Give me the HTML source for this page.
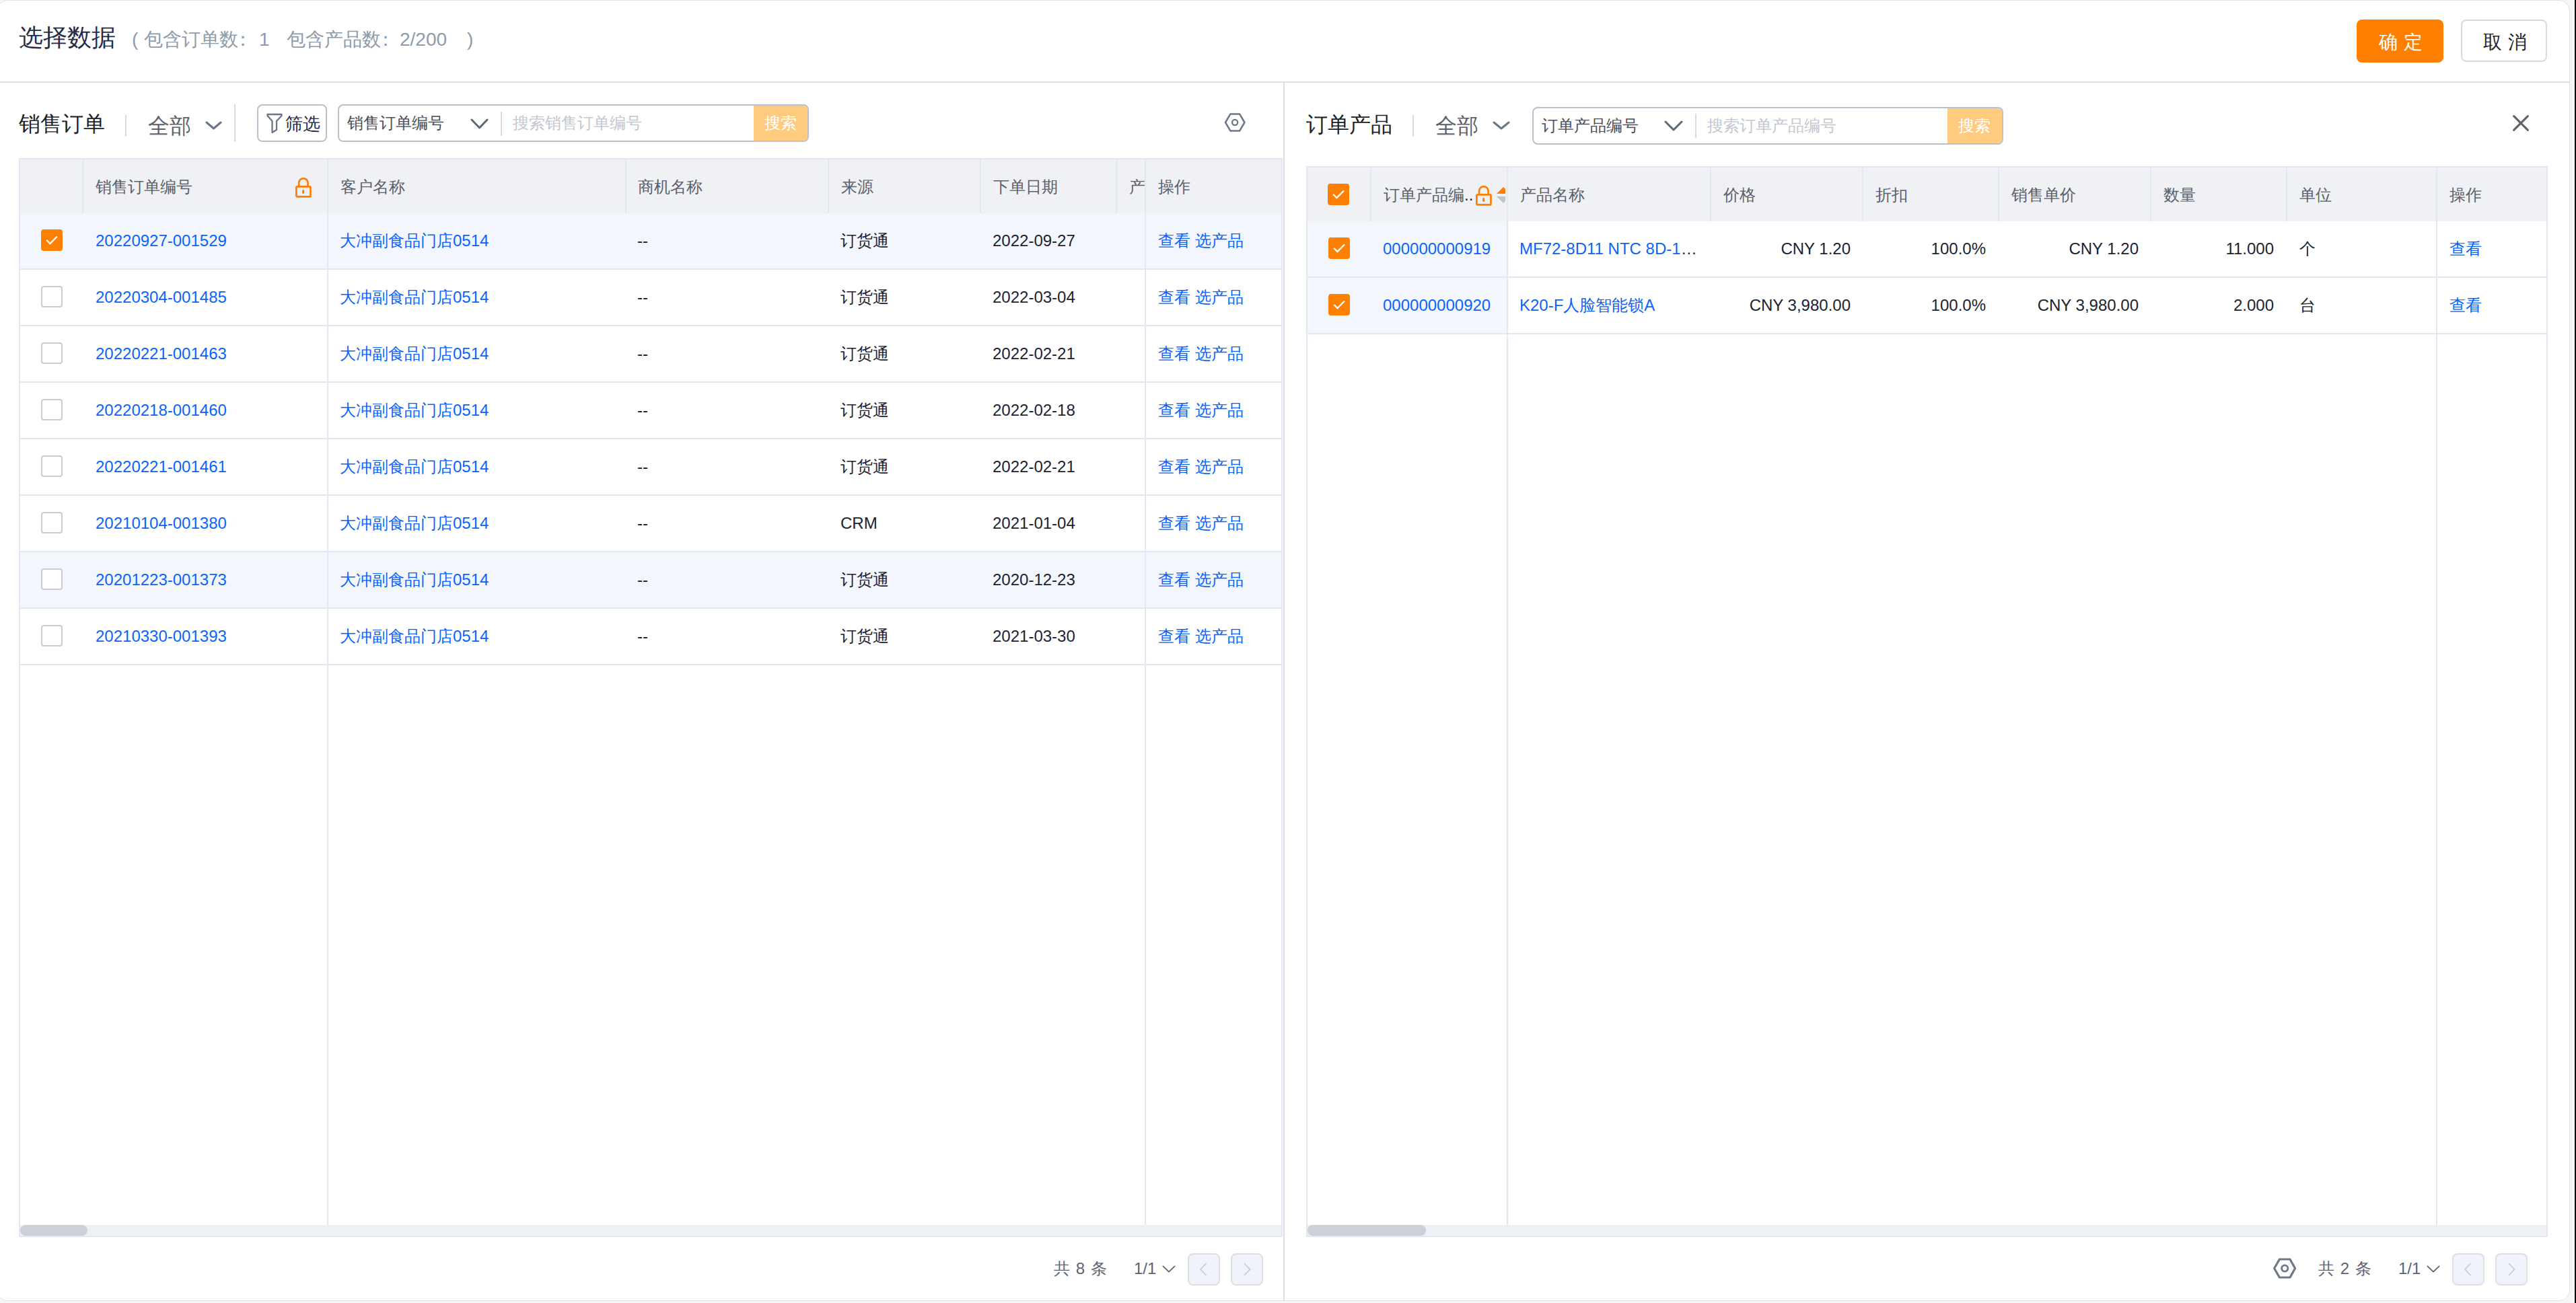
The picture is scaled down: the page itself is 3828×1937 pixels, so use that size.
<!DOCTYPE html>
<html><head><meta charset="utf-8">
<style>
*{box-sizing:border-box;margin:0;padding:0}
html,body{width:3828px;height:1937px;overflow:hidden;background:#f6f6f6;font-family:"Liberation Sans",sans-serif}
.abs{position:absolute}
.t{position:absolute;white-space:nowrap}
</style></head><body>

<div class="abs" style="left:3825px;top:0px;width:1px;height:1937px;background:#fff;"></div>
<div class="abs" style="left:3826px;top:0px;width:2px;height:1937px;background:#000;"></div>
<div class="abs" style="left:-5px;top:0;width:3824px;height:1934px;background:#fff;border:1px solid #e2e2e2;border-radius:16px"></div>
<div class="t" style="left:28px;top:36px;font-size:36px;line-height:40px;height:40px;color:#262b48;">选择数据</div>
<div class="t" style="left:196px;top:41px;font-size:28px;line-height:36px;height:36px;color:#8e9bab;">(</div>
<div class="t" style="left:214px;top:41px;font-size:28px;line-height:36px;height:36px;color:#8e9bab;">包含订单数</div>
<div class="t" style="left:347px;top:41px;font-size:28px;line-height:36px;height:36px;color:#8e9bab;">：</div>
<div class="t" style="left:385px;top:41px;font-size:28px;line-height:36px;height:36px;color:#8e9bab;">1</div>
<div class="t" style="left:426px;top:41px;font-size:28px;line-height:36px;height:36px;color:#8e9bab;">包含产品数</div>
<div class="t" style="left:559px;top:41px;font-size:28px;line-height:36px;height:36px;color:#8e9bab;">：</div>
<div class="t" style="left:594px;top:41px;font-size:28px;line-height:36px;height:36px;color:#8e9bab;">2/200</div>
<div class="t" style="left:694px;top:41px;font-size:28px;line-height:36px;height:36px;color:#8e9bab;">)</div>
<div class="abs" style="left:3502px;top:29px;width:129px;height:64px;border-radius:8px;background:#ff8000"></div>
<div class="t" style="left:3535px;top:45px;font-size:28px;line-height:36px;height:36px;color:#fff;letter-spacing:9px">确定</div>
<div class="abs" style="left:3657px;top:29px;width:128px;height:63px;border-radius:8px;border:2px solid #d6dae2;background:#fff"></div>
<div class="t" style="left:3690px;top:45px;font-size:28px;line-height:36px;height:36px;color:#1f2330;letter-spacing:9px">取消</div>
<div class="abs" style="left:0px;top:121px;width:3819px;height:2px;background:#dcdfe5;"></div>
<div class="abs" style="left:1907px;top:123px;width:2px;height:1811px;background:#dcdfe5;"></div>
<div class="t" style="left:28px;top:164px;font-size:32px;line-height:40px;height:40px;color:#1b1f28;">销售订单</div>
<div class="abs" style="left:186px;top:171px;width:2px;height:32px;background:#d7dce4;"></div>
<div class="t" style="left:220px;top:167px;font-size:32px;line-height:40px;height:40px;color:#5c6068;">全部</div>
<svg class="abs" style="left:305px;top:180px" width="25" height="13" viewBox="0 0 25 13"><path d="M2.0 2.0 L12.5 11.0 L23.0 2.0" fill="none" stroke="#6b7588" stroke-width="3" stroke-linecap="round" stroke-linejoin="round"/></svg>
<div class="abs" style="left:348px;top:155px;width:2px;height:56px;background:#d7dce4;"></div>
<div class="abs" style="left:382px;top:155px;width:104px;height:56px;border-radius:8px;border:2px solid #bac1cd;background:#fff"></div>
<svg class="abs" style="left:394px;top:167px" width="28" height="34" viewBox="0 0 28 34"><path d="M3.5 3 H24.5 V5 L17 13 V26 L10.5 30 V13 L3.5 5 Z" fill="none" stroke="#6b7588" stroke-width="2.3" stroke-linejoin="round"/></svg>
<div class="t" style="left:424px;top:167px;font-size:26px;line-height:34px;height:34px;color:#252a48;">筛选</div>
<div class="abs" style="left:502px;top:155px;width:700px;height:56px;border-radius:8px;border:2px solid #bac1cd;background:#fff;overflow:hidden"><div class="abs" style="right:0;top:0;width:80px;height:52px;background:#ffcb7f"></div></div>
<div class="t" style="left:516px;top:167px;font-size:24px;line-height:32px;height:32px;color:#4a4f5a;">销售订单编号</div>
<svg class="abs" style="left:699px;top:176px" width="27" height="16" viewBox="0 0 27 16"><path d="M2.0 2.0 L13.5 14.0 L25.0 2.0" fill="none" stroke="#5f6878" stroke-width="3" stroke-linecap="round" stroke-linejoin="round"/></svg>
<div class="abs" style="left:744px;top:166px;width:2px;height:36px;background:#d7dce4;"></div>
<div class="t" style="left:762px;top:167px;font-size:24px;line-height:32px;height:32px;color:#c3c7cf;">搜索销售订单编号</div>
<div class="t" style="left:1136px;top:167px;font-size:24px;line-height:32px;height:32px;color:#ffffff;">搜索</div>
<svg class="abs" style="left:1816px;top:165px" width="38" height="34" viewBox="0 0 38 34"><path d="M5 17 L12.3 4.6 H26.2 L33.4 17 L26.2 29.4 H12.3 Z" fill="none" stroke="#6d7789" stroke-width="2.5" stroke-linejoin="round"/><circle cx="19.1" cy="17" r="4.1" fill="none" stroke="#6d7789" stroke-width="2.3"/></svg>
<div class="abs" style="left:28px;top:235px;width:1878px;height:1604px;border:2px solid #e2e7f1"></div>
<div class="abs" style="left:30px;top:237px;width:1874px;height:80px;background:#eff1f5;"></div>
<div class="abs" style="left:122px;top:237px;width:2px;height:80px;background:#e2e7f1;"></div>
<div class="abs" style="left:486px;top:237px;width:2px;height:80px;background:#e2e7f1;"></div>
<div class="abs" style="left:929px;top:237px;width:2px;height:80px;background:#e2e7f1;"></div>
<div class="abs" style="left:1230px;top:237px;width:2px;height:80px;background:#e2e7f1;"></div>
<div class="abs" style="left:1456px;top:237px;width:2px;height:80px;background:#e2e7f1;"></div>
<div class="abs" style="left:1658px;top:237px;width:2px;height:80px;background:#e2e7f1;"></div>
<div class="abs" style="left:1701px;top:237px;width:2px;height:80px;background:#e2e7f1;"></div>
<div class="t" style="left:142px;top:262px;font-size:24px;line-height:32px;height:32px;color:#5b606b;">销售订单编号</div>
<svg class="abs" style="left:438px;top:264px" width="26" height="31" viewBox="0 0 26 31"><path d="M6.1 13.5 V7.95 A6.75 6.75 0 0 1 19.6 7.95 V13.5" fill="none" stroke="#ff7d00" stroke-width="2.6"/><rect x="2.35" y="13.45" width="21.1" height="15" rx="1.5" fill="none" stroke="#ff7d00" stroke-width="2.7"/><line x1="12.65" y1="19.4" x2="12.65" y2="22.5" stroke="#ff7d00" stroke-width="3" stroke-linecap="round"/></svg>
<div class="t" style="left:506px;top:262px;font-size:24px;line-height:32px;height:32px;color:#5b606b;">客户名称</div>
<div class="t" style="left:948px;top:262px;font-size:24px;line-height:32px;height:32px;color:#5b606b;">商机名称</div>
<div class="t" style="left:1250px;top:262px;font-size:24px;line-height:32px;height:32px;color:#5b606b;">来源</div>
<div class="t" style="left:1476px;top:262px;font-size:24px;line-height:32px;height:32px;color:#5b606b;">下单日期</div>
<div class="abs" style="left:1658px;top:237px;width:43px;height:80px;overflow:hidden"><div class="t" style="left:20px;top:25px;font-size:24px;line-height:32px;color:#5b606b">产品</div></div>
<div class="t" style="left:1721px;top:262px;font-size:24px;line-height:32px;height:32px;color:#5b606b;">操作</div>
<div class="abs" style="left:30px;top:317px;width:1874px;height:82px;background:#f3f6fd;"></div>
<div class="abs" style="left:30px;top:399px;width:1874px;height:2px;background:#e2e7f1;"></div>
<div class="abs" style="left:61px;top:341px;width:32px;height:32px;border-radius:4px;background:#ff8000"><svg width="32" height="32" viewBox="0 0 32 32"><path d="M8.2 15.9 L13.4 21.1 L24 10.5" fill="none" stroke="#fff" stroke-width="2.2"/></svg></div>
<div class="t" style="left:142px;top:342px;font-size:24px;line-height:32px;height:32px;color:#0a64fa;">20220927-001529</div>
<div class="t" style="left:505px;top:342px;font-size:24px;line-height:32px;height:32px;color:#0a64fa;">大冲副食品门店0514</div>
<div class="t" style="left:947px;top:342px;font-size:24px;line-height:32px;height:32px;color:#1d2230;">--</div>
<div class="t" style="left:1249px;top:342px;font-size:24px;line-height:32px;height:32px;color:#1d2230;">订货通</div>
<div class="t" style="left:1475px;top:342px;font-size:24px;line-height:32px;height:32px;color:#1d2230;">2022-09-27</div>
<div class="t" style="left:1721px;top:342px;font-size:24px;line-height:32px;height:32px;color:#0a64fa;">查看 选产品</div>
<div class="abs" style="left:30px;top:483px;width:1874px;height:2px;background:#e2e7f1;"></div>
<div class="abs" style="left:61px;top:425px;width:32px;height:32px;border-radius:4px;border:2px solid #c7ccd5;background:#fff"></div>
<div class="t" style="left:142px;top:426px;font-size:24px;line-height:32px;height:32px;color:#0a64fa;">20220304-001485</div>
<div class="t" style="left:505px;top:426px;font-size:24px;line-height:32px;height:32px;color:#0a64fa;">大冲副食品门店0514</div>
<div class="t" style="left:947px;top:426px;font-size:24px;line-height:32px;height:32px;color:#1d2230;">--</div>
<div class="t" style="left:1249px;top:426px;font-size:24px;line-height:32px;height:32px;color:#1d2230;">订货通</div>
<div class="t" style="left:1475px;top:426px;font-size:24px;line-height:32px;height:32px;color:#1d2230;">2022-03-04</div>
<div class="t" style="left:1721px;top:426px;font-size:24px;line-height:32px;height:32px;color:#0a64fa;">查看 选产品</div>
<div class="abs" style="left:30px;top:567px;width:1874px;height:2px;background:#e2e7f1;"></div>
<div class="abs" style="left:61px;top:509px;width:32px;height:32px;border-radius:4px;border:2px solid #c7ccd5;background:#fff"></div>
<div class="t" style="left:142px;top:510px;font-size:24px;line-height:32px;height:32px;color:#0a64fa;">20220221-001463</div>
<div class="t" style="left:505px;top:510px;font-size:24px;line-height:32px;height:32px;color:#0a64fa;">大冲副食品门店0514</div>
<div class="t" style="left:947px;top:510px;font-size:24px;line-height:32px;height:32px;color:#1d2230;">--</div>
<div class="t" style="left:1249px;top:510px;font-size:24px;line-height:32px;height:32px;color:#1d2230;">订货通</div>
<div class="t" style="left:1475px;top:510px;font-size:24px;line-height:32px;height:32px;color:#1d2230;">2022-02-21</div>
<div class="t" style="left:1721px;top:510px;font-size:24px;line-height:32px;height:32px;color:#0a64fa;">查看 选产品</div>
<div class="abs" style="left:30px;top:651px;width:1874px;height:2px;background:#e2e7f1;"></div>
<div class="abs" style="left:61px;top:593px;width:32px;height:32px;border-radius:4px;border:2px solid #c7ccd5;background:#fff"></div>
<div class="t" style="left:142px;top:594px;font-size:24px;line-height:32px;height:32px;color:#0a64fa;">20220218-001460</div>
<div class="t" style="left:505px;top:594px;font-size:24px;line-height:32px;height:32px;color:#0a64fa;">大冲副食品门店0514</div>
<div class="t" style="left:947px;top:594px;font-size:24px;line-height:32px;height:32px;color:#1d2230;">--</div>
<div class="t" style="left:1249px;top:594px;font-size:24px;line-height:32px;height:32px;color:#1d2230;">订货通</div>
<div class="t" style="left:1475px;top:594px;font-size:24px;line-height:32px;height:32px;color:#1d2230;">2022-02-18</div>
<div class="t" style="left:1721px;top:594px;font-size:24px;line-height:32px;height:32px;color:#0a64fa;">查看 选产品</div>
<div class="abs" style="left:30px;top:735px;width:1874px;height:2px;background:#e2e7f1;"></div>
<div class="abs" style="left:61px;top:677px;width:32px;height:32px;border-radius:4px;border:2px solid #c7ccd5;background:#fff"></div>
<div class="t" style="left:142px;top:678px;font-size:24px;line-height:32px;height:32px;color:#0a64fa;">20220221-001461</div>
<div class="t" style="left:505px;top:678px;font-size:24px;line-height:32px;height:32px;color:#0a64fa;">大冲副食品门店0514</div>
<div class="t" style="left:947px;top:678px;font-size:24px;line-height:32px;height:32px;color:#1d2230;">--</div>
<div class="t" style="left:1249px;top:678px;font-size:24px;line-height:32px;height:32px;color:#1d2230;">订货通</div>
<div class="t" style="left:1475px;top:678px;font-size:24px;line-height:32px;height:32px;color:#1d2230;">2022-02-21</div>
<div class="t" style="left:1721px;top:678px;font-size:24px;line-height:32px;height:32px;color:#0a64fa;">查看 选产品</div>
<div class="abs" style="left:30px;top:819px;width:1874px;height:2px;background:#e2e7f1;"></div>
<div class="abs" style="left:61px;top:761px;width:32px;height:32px;border-radius:4px;border:2px solid #c7ccd5;background:#fff"></div>
<div class="t" style="left:142px;top:762px;font-size:24px;line-height:32px;height:32px;color:#0a64fa;">20210104-001380</div>
<div class="t" style="left:505px;top:762px;font-size:24px;line-height:32px;height:32px;color:#0a64fa;">大冲副食品门店0514</div>
<div class="t" style="left:947px;top:762px;font-size:24px;line-height:32px;height:32px;color:#1d2230;">--</div>
<div class="t" style="left:1249px;top:762px;font-size:24px;line-height:32px;height:32px;color:#1d2230;">CRM</div>
<div class="t" style="left:1475px;top:762px;font-size:24px;line-height:32px;height:32px;color:#1d2230;">2021-01-04</div>
<div class="t" style="left:1721px;top:762px;font-size:24px;line-height:32px;height:32px;color:#0a64fa;">查看 选产品</div>
<div class="abs" style="left:30px;top:821px;width:1874px;height:82px;background:#f3f6fd;"></div>
<div class="abs" style="left:30px;top:903px;width:1874px;height:2px;background:#e2e7f1;"></div>
<div class="abs" style="left:61px;top:845px;width:32px;height:32px;border-radius:4px;border:2px solid #c7ccd5;background:#fff"></div>
<div class="t" style="left:142px;top:846px;font-size:24px;line-height:32px;height:32px;color:#0a64fa;">20201223-001373</div>
<div class="t" style="left:505px;top:846px;font-size:24px;line-height:32px;height:32px;color:#0a64fa;">大冲副食品门店0514</div>
<div class="t" style="left:947px;top:846px;font-size:24px;line-height:32px;height:32px;color:#1d2230;">--</div>
<div class="t" style="left:1249px;top:846px;font-size:24px;line-height:32px;height:32px;color:#1d2230;">订货通</div>
<div class="t" style="left:1475px;top:846px;font-size:24px;line-height:32px;height:32px;color:#1d2230;">2020-12-23</div>
<div class="t" style="left:1721px;top:846px;font-size:24px;line-height:32px;height:32px;color:#0a64fa;">查看 选产品</div>
<div class="abs" style="left:30px;top:987px;width:1874px;height:2px;background:#e2e7f1;"></div>
<div class="abs" style="left:61px;top:929px;width:32px;height:32px;border-radius:4px;border:2px solid #c7ccd5;background:#fff"></div>
<div class="t" style="left:142px;top:930px;font-size:24px;line-height:32px;height:32px;color:#0a64fa;">20210330-001393</div>
<div class="t" style="left:505px;top:930px;font-size:24px;line-height:32px;height:32px;color:#0a64fa;">大冲副食品门店0514</div>
<div class="t" style="left:947px;top:930px;font-size:24px;line-height:32px;height:32px;color:#1d2230;">--</div>
<div class="t" style="left:1249px;top:930px;font-size:24px;line-height:32px;height:32px;color:#1d2230;">订货通</div>
<div class="t" style="left:1475px;top:930px;font-size:24px;line-height:32px;height:32px;color:#1d2230;">2021-03-30</div>
<div class="t" style="left:1721px;top:930px;font-size:24px;line-height:32px;height:32px;color:#0a64fa;">查看 选产品</div>
<div class="abs" style="left:486px;top:317px;width:2px;height:1504px;background:#e2e7f1;"></div>
<div class="abs" style="left:1701px;top:317px;width:2px;height:1504px;background:#e2e7f1;"></div>
<div class="abs" style="left:30px;top:1821px;width:1874px;height:16px;background:#eff0f4;"></div>
<div class="abs" style="left:30px;top:1821px;width:100px;height:16px;border-radius:8px;background:#cdd0d8"></div>
<div class="t" style="left:1941px;top:165px;font-size:32px;line-height:40px;height:40px;color:#1b1f28;">订单产品</div>
<div class="abs" style="left:2099px;top:171px;width:2px;height:32px;background:#d7dce4;"></div>
<div class="t" style="left:2133px;top:167px;font-size:32px;line-height:40px;height:40px;color:#5c6068;">全部</div>
<svg class="abs" style="left:2218px;top:180px" width="26" height="13" viewBox="0 0 26 13"><path d="M2.0 2.0 L13.0 11.0 L24.0 2.0" fill="none" stroke="#6b7588" stroke-width="3" stroke-linecap="round" stroke-linejoin="round"/></svg>
<div class="abs" style="left:2277px;top:159px;width:700px;height:56px;border-radius:8px;border:2px solid #bac1cd;background:#fff;overflow:hidden"><div class="abs" style="right:0;top:0;width:81px;height:52px;background:#ffcb7f"></div></div>
<div class="t" style="left:2291px;top:171px;font-size:24px;line-height:32px;height:32px;color:#4a4f5a;">订单产品编号</div>
<svg class="abs" style="left:2473px;top:179px" width="28" height="16" viewBox="0 0 28 16"><path d="M2.0 2.0 L14.0 14.0 L26.0 2.0" fill="none" stroke="#5f6878" stroke-width="3" stroke-linecap="round" stroke-linejoin="round"/></svg>
<div class="abs" style="left:2519px;top:169px;width:2px;height:36px;background:#d7dce4;"></div>
<div class="t" style="left:2537px;top:171px;font-size:24px;line-height:32px;height:32px;color:#c3c7cf;">搜索订单产品编号</div>
<div class="t" style="left:2910px;top:171px;font-size:24px;line-height:32px;height:32px;color:#ffffff;">搜索</div>
<svg class="abs" style="left:3732px;top:169px" width="28" height="28" viewBox="0 0 28 28"><path d="M3.6 3.6 L24.4 24.4 M24.4 3.6 L3.6 24.4" fill="none" stroke="#5f6168" stroke-width="3" stroke-linecap="round"/></svg>
<div class="abs" style="left:1941px;top:247px;width:1845px;height:1592px;border:2px solid #e2e7f1"></div>
<div class="abs" style="left:1943px;top:249px;width:1841px;height:80px;background:#eff1f5;"></div>
<div class="abs" style="left:2036px;top:249px;width:2px;height:80px;background:#e2e7f1;"></div>
<div class="abs" style="left:2239px;top:249px;width:2px;height:80px;background:#e2e7f1;"></div>
<div class="abs" style="left:2541px;top:249px;width:2px;height:80px;background:#e2e7f1;"></div>
<div class="abs" style="left:2767px;top:249px;width:2px;height:80px;background:#e2e7f1;"></div>
<div class="abs" style="left:2969px;top:249px;width:2px;height:80px;background:#e2e7f1;"></div>
<div class="abs" style="left:3195px;top:249px;width:2px;height:80px;background:#e2e7f1;"></div>
<div class="abs" style="left:3397px;top:249px;width:2px;height:80px;background:#e2e7f1;"></div>
<div class="abs" style="left:3620px;top:249px;width:2px;height:80px;background:#e2e7f1;"></div>
<div class="abs" style="left:1973px;top:273px;width:32px;height:32px;border-radius:4px;background:#ff8000"><svg width="32" height="32" viewBox="0 0 32 32"><path d="M8.2 15.9 L13.4 21.1 L24 10.5" fill="none" stroke="#fff" stroke-width="2.2"/></svg></div>
<div class="abs" style="left:2038px;top:249px;width:199px;height:80px;overflow:hidden"><div class="t" style="left:18px;top:25px;font-size:24px;line-height:32px;color:#5b606b">订单产品编<span style="color:#1d2230">..</span></div></div>
<svg class="abs" style="left:2192px;top:276px" width="26" height="31" viewBox="0 0 26 31"><path d="M6.1 13.5 V7.95 A6.75 6.75 0 0 1 19.6 7.95 V13.5" fill="none" stroke="#ff7d00" stroke-width="2.6"/><rect x="2.35" y="13.45" width="21.1" height="15" rx="1.5" fill="none" stroke="#ff7d00" stroke-width="2.7"/><line x1="12.65" y1="19.4" x2="12.65" y2="22.5" stroke="#ff7d00" stroke-width="3" stroke-linecap="round"/></svg>
<div class="abs" style="left:2220px;top:249px;width:17px;height:80px;overflow:hidden"><svg class="abs" style="left:0;top:0" width="30" height="80" viewBox="0 0 30 80"><path d="M4 39 L14 29 L24 39 Z" fill="#ff7d00"/><path d="M4 43 L14 53 L24 43 Z" fill="#c0c4cc"/></svg></div>
<div class="t" style="left:2259px;top:274px;font-size:24px;line-height:32px;height:32px;color:#5b606b;">产品名称</div>
<div class="t" style="left:2561px;top:274px;font-size:24px;line-height:32px;height:32px;color:#5b606b;">价格</div>
<div class="t" style="left:2787px;top:274px;font-size:24px;line-height:32px;height:32px;color:#5b606b;">折扣</div>
<div class="t" style="left:2989px;top:274px;font-size:24px;line-height:32px;height:32px;color:#5b606b;">销售单价</div>
<div class="t" style="left:3215px;top:274px;font-size:24px;line-height:32px;height:32px;color:#5b606b;">数量</div>
<div class="t" style="left:3417px;top:274px;font-size:24px;line-height:32px;height:32px;color:#5b606b;">单位</div>
<div class="t" style="left:3640px;top:274px;font-size:24px;line-height:32px;height:32px;color:#5b606b;">操作</div>
<div class="abs" style="left:1943px;top:329px;width:296px;height:82px;background:#f3f6fd;"></div>
<div class="abs" style="left:1943px;top:411px;width:1841px;height:2px;background:#e2e7f1;"></div>
<div class="abs" style="left:1974px;top:353px;width:32px;height:32px;border-radius:4px;background:#ff8000"><svg width="32" height="32" viewBox="0 0 32 32"><path d="M8.2 15.9 L13.4 21.1 L24 10.5" fill="none" stroke="#fff" stroke-width="2.2"/></svg></div>
<div class="t" style="left:2055px;top:354px;font-size:24px;line-height:32px;height:32px;color:#0a64fa;">000000000919</div>
<div class="t" style="left:2258px;top:354px;font-size:24px;line-height:32px;height:32px;color:#0a64fa;">MF72-8D11 NTC 8D-1<span style="color:#1d2230">…</span></div>
<div class="t" style="right:1078px;top:354px;font-size:24px;line-height:32px;height:32px;color:#1d2230;text-align:right;">CNY 1.20</div>
<div class="t" style="right:877px;top:354px;font-size:24px;line-height:32px;height:32px;color:#1d2230;text-align:right;">100.0%</div>
<div class="t" style="right:650px;top:354px;font-size:24px;line-height:32px;height:32px;color:#1d2230;text-align:right;">CNY 1.20</div>
<div class="t" style="right:449px;top:354px;font-size:24px;line-height:32px;height:32px;color:#1d2230;text-align:right;">11.000</div>
<div class="t" style="left:3417px;top:354px;font-size:24px;line-height:32px;height:32px;color:#1d2230;">个</div>
<div class="t" style="left:3640px;top:354px;font-size:24px;line-height:32px;height:32px;color:#0a64fa;">查看</div>
<div class="abs" style="left:1943px;top:413px;width:296px;height:82px;background:#f3f6fd;"></div>
<div class="abs" style="left:1943px;top:495px;width:1841px;height:2px;background:#e2e7f1;"></div>
<div class="abs" style="left:1974px;top:437px;width:32px;height:32px;border-radius:4px;background:#ff8000"><svg width="32" height="32" viewBox="0 0 32 32"><path d="M8.2 15.9 L13.4 21.1 L24 10.5" fill="none" stroke="#fff" stroke-width="2.2"/></svg></div>
<div class="t" style="left:2055px;top:438px;font-size:24px;line-height:32px;height:32px;color:#0a64fa;">000000000920</div>
<div class="t" style="left:2258px;top:438px;font-size:24px;line-height:32px;height:32px;color:#0a64fa;">K20-F人脸智能锁A</div>
<div class="t" style="right:1078px;top:438px;font-size:24px;line-height:32px;height:32px;color:#1d2230;text-align:right;">CNY 3,980.00</div>
<div class="t" style="right:877px;top:438px;font-size:24px;line-height:32px;height:32px;color:#1d2230;text-align:right;">100.0%</div>
<div class="t" style="right:650px;top:438px;font-size:24px;line-height:32px;height:32px;color:#1d2230;text-align:right;">CNY 3,980.00</div>
<div class="t" style="right:449px;top:438px;font-size:24px;line-height:32px;height:32px;color:#1d2230;text-align:right;">2.000</div>
<div class="t" style="left:3417px;top:438px;font-size:24px;line-height:32px;height:32px;color:#1d2230;">台</div>
<div class="t" style="left:3640px;top:438px;font-size:24px;line-height:32px;height:32px;color:#0a64fa;">查看</div>
<div class="abs" style="left:2239px;top:329px;width:2px;height:1492px;background:#e2e7f1;"></div>
<div class="abs" style="left:3620px;top:329px;width:2px;height:1492px;background:#e2e7f1;"></div>
<div class="abs" style="left:1943px;top:1821px;width:1841px;height:16px;background:#eff0f4;"></div>
<div class="abs" style="left:1943px;top:1821px;width:176px;height:16px;border-radius:8px;background:#cdd0d8"></div>
<div class="t" style="left:1566px;top:1870px;font-size:24px;line-height:32px;height:32px;color:#5d6370;word-spacing:2px">共 8 条</div>
<div class="t" style="left:1685px;top:1870px;font-size:24px;line-height:32px;height:32px;color:#5d6370;">1/1</div>
<svg class="abs" style="left:1727px;top:1881px" width="20" height="11" viewBox="0 0 20 11"><path d="M1.4 1.4 L10.0 9.6 L18.6 1.4" fill="none" stroke="#5d6370" stroke-width="1.8" stroke-linecap="round" stroke-linejoin="round"/></svg>
<div class="abs" style="left:1765px;top:1863px;width:48px;height:48px;border-radius:8px;border:2px solid #dcdfe5;background:#f0f3fa"></div>
<svg class="abs" style="left:1765px;top:1863px" width="47" height="47" viewBox="0 0 47 47"><path d="M27.5 15 L19 24 L27.5 33" fill="none" stroke="#c8cace" stroke-width="1.7"/></svg>
<div class="abs" style="left:1829px;top:1863px;width:48px;height:48px;border-radius:8px;border:2px solid #dcdfe5;background:#f0f3fa"></div>
<svg class="abs" style="left:1829px;top:1863px" width="47" height="47" viewBox="0 0 47 47"><path d="M20 15 L28.5 24 L20 33" fill="none" stroke="#c8cace" stroke-width="1.7"/></svg>
<svg class="abs" style="left:3375px;top:1867px" width="40" height="37" viewBox="0 0 40 37"><path d="M4.6 18.5 L12.4 5 H28 L35.6 18.5 L28 32 H12.4 Z" fill="none" stroke="#6d7889" stroke-width="3.2" stroke-linejoin="round"/><circle cx="20.2" cy="18.5" r="4.6" fill="none" stroke="#6d7889" stroke-width="2.9"/></svg>
<div class="t" style="left:3445px;top:1870px;font-size:24px;line-height:32px;height:32px;color:#5d6370;word-spacing:2px">共 2 条</div>
<div class="t" style="left:3564px;top:1870px;font-size:24px;line-height:32px;height:32px;color:#5d6370;">1/1</div>
<svg class="abs" style="left:3606px;top:1881px" width="20" height="11" viewBox="0 0 20 11"><path d="M1.4 1.4 L10.0 9.6 L18.6 1.4" fill="none" stroke="#5d6370" stroke-width="1.8" stroke-linecap="round" stroke-linejoin="round"/></svg>
<div class="abs" style="left:3644px;top:1863px;width:48px;height:48px;border-radius:8px;border:2px solid #dcdfe5;background:#f0f3fa"></div>
<svg class="abs" style="left:3644px;top:1863px" width="47" height="47" viewBox="0 0 47 47"><path d="M27.5 15 L19 24 L27.5 33" fill="none" stroke="#c8cace" stroke-width="1.7"/></svg>
<div class="abs" style="left:3708px;top:1863px;width:48px;height:48px;border-radius:8px;border:2px solid #dcdfe5;background:#f0f3fa"></div>
<svg class="abs" style="left:3708px;top:1863px" width="47" height="47" viewBox="0 0 47 47"><path d="M20 15 L28.5 24 L20 33" fill="none" stroke="#c8cace" stroke-width="1.7"/></svg>
</body></html>
